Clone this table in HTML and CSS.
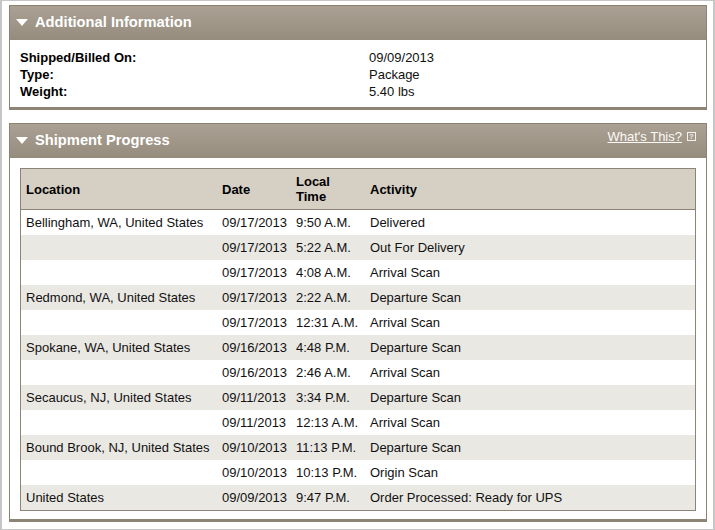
FILE: index.html
```html
<!DOCTYPE html>
<html lang="en">
<head>
  <meta charset="UTF-8">
  <title>Shipment Details</title>
  <link rel="stylesheet" href="styles.css">
</head>
<body>
  <div class="frame">

    <div class="panel panel-info">
      <div class="panel-header">
        <span class="arrow"></span>
        <h3>Additional Information</h3>
      </div>
      <div class="info-body">
        <div class="info-label">Shipped/Billed On:</div>
        <div>09/09/2013</div>
        <div class="info-label">Type:</div>
        <div>Package</div>
        <div class="info-label">Weight:</div>
        <div>5.40 lbs</div>
      </div>
    </div>

    <div class="panel panel-progress">
      <div class="panel-header">
        <span class="arrow"></span>
        <h3>Shipment Progress</h3>
        <a href="#" class="help-link">What's This?</a>
        <span class="help-icon">?</span>
      </div>
      <div class="progress-body">
        <table class="progress">
          <colgroup>
            <col class="col-location">
            <col class="col-date">
            <col class="col-time">
            <col>
          </colgroup>
          <thead>
            <tr>
              <th>Location</th>
              <th>Date</th>
              <th>Local<br>Time</th>
              <th>Activity</th>
            </tr>
          </thead>
          <tbody>
            <tr><td>Bellingham, WA, United States</td><td>09/17/2013</td><td>9:50 A.M.</td><td>Delivered</td></tr>
            <tr><td></td><td>09/17/2013</td><td>5:22 A.M.</td><td>Out For Delivery</td></tr>
            <tr><td></td><td>09/17/2013</td><td>4:08 A.M.</td><td>Arrival Scan</td></tr>
            <tr><td>Redmond, WA, United States</td><td>09/17/2013</td><td>2:22 A.M.</td><td>Departure Scan</td></tr>
            <tr><td></td><td>09/17/2013</td><td>12:31 A.M.</td><td>Arrival Scan</td></tr>
            <tr><td>Spokane, WA, United States</td><td>09/16/2013</td><td>4:48 P.M.</td><td>Departure Scan</td></tr>
            <tr><td></td><td>09/16/2013</td><td>2:46 A.M.</td><td>Arrival Scan</td></tr>
            <tr><td>Secaucus, NJ, United States</td><td>09/11/2013</td><td>3:34 P.M.</td><td>Departure Scan</td></tr>
            <tr><td></td><td>09/11/2013</td><td>12:13 A.M.</td><td>Arrival Scan</td></tr>
            <tr><td>Bound Brook, NJ, United States</td><td>09/10/2013</td><td>11:13 P.M.</td><td>Departure Scan</td></tr>
            <tr><td></td><td>09/10/2013</td><td>10:13 P.M.</td><td>Origin Scan</td></tr>
            <tr><td>United States</td><td>09/09/2013</td><td>9:47 P.M.</td><td>Order Processed: Ready for UPS</td></tr>
          </tbody>
        </table>
      </div>
    </div>

  </div>
</body>
</html>
```

FILE: styles.css
```css
html, body {
  margin: 0;
  padding: 0;
  background: #fff;
}

body {
  font-family: "Liberation Sans", Arial, Helvetica, sans-serif;
  font-size: 13px;
  color: #111;
}

.frame {
  box-sizing: border-box;
  width: 715px;
  height: 530px;
  border: 1px solid #c6c6c6;
  border-left-width: 2px;
  border-right-width: 2px;
  padding: 4px 6px 0 7px;
}

.panel {
  border: 1px solid #8b8273;
  border-bottom: 3px solid #8d8476;
  background: #fff;
}

.panel-progress {
  margin-top: 13px;
}

.panel-header {
  display: flex;
  align-items: center;
  height: 34px;
  padding: 0 10px 2px 6px;
  box-sizing: border-box;
  background: linear-gradient(#aaa194, #968c7e);
  color: #fff;
}

.panel-header h3 {
  margin: 0;
  font-size: 14.7px;
  font-weight: bold;
  flex: 1;
}

.arrow {
  width: 0;
  height: 0;
  border-left: 6px solid transparent;
  border-right: 6px solid transparent;
  border-top: 7px solid #fff;
  margin-right: 7px;
}

.help-link {
  color: #fbfaf7;
  font-size: 13px;
  text-decoration: underline;
  margin-top: -8px;
}

.help-icon {
  box-sizing: border-box;
  width: 9px;
  height: 9px;
  margin-left: 5px;
  margin-top: -7px;
  border: 1px solid #f3f1ec;
  font-size: 7px;
  line-height: 7px;
  text-align: center;
  color: #f3f1ec;
  font-weight: bold;
}

.info-body {
  display: grid;
  grid-template-columns: 349px 1fr;
  padding: 9px 10px 7px;
  line-height: 17px;
}

.info-label {
  font-weight: bold;
  color: #000;
}

.progress-body {
  padding: 10px 10px 8px;
}

.progress {
  width: 100%;
  table-layout: fixed;
  border-collapse: separate;
  border-spacing: 0;
  border: 1px solid #8d8476;
}

.col-location {
  width: 196px;
}

.col-date,
.col-time {
  width: 74px;
}

.progress th {
  background: #d6cfc4;
  text-align: left;
  font-weight: bold;
  color: #000;
  height: 40px;
  box-sizing: border-box;
  padding: 5px 5px;
  line-height: 15px;
  border-bottom: 1px solid #8d8476;
}

.progress td {
  height: 25px;
  box-sizing: border-box;
  padding: 0 5px;
  white-space: nowrap;
  vertical-align: middle;
}

.progress tbody tr:nth-child(even) td {
  background: #eae8e3;
}
```
